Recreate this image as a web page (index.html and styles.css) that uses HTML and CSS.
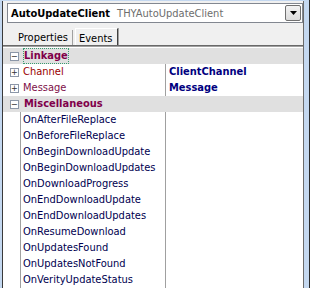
FILE: index.html
```html
<!DOCTYPE html>
<html lang="en">
<head>
    <meta charset="UTF-8">
    <title>Object Inspector</title>
    <link rel="stylesheet" href="styles.css">
</head>
<body>
    <div class="frame">
        <div class="panel">
            <div class="combo">
                <span class="comp-name">AutoUpdateClient</span>
                <span class="comp-type">THYAutoUpdateClient</span>
                <span class="combo-btn">
                    <svg width="7" height="4" viewBox="0 0 7 4"><path d="M0 0h7L3.5 4z" fill="#000"/></svg>
                </span>
            </div>

            <div class="tabs">
                <span class="tab">Properties</span>
                <span class="tab active">Events</span>
            </div>

            <div class="grid">
                <div class="row cat">
                    <span class="box">&minus;</span>
                    <span class="name"><span class="focus">Linkage</span></span>
                </div>
                <div class="row sub">
                    <span class="box">+</span>
                    <span class="name ref">Channel</span>
                    <span class="value">ClientChannel</span>
                </div>
                <div class="row sub">
                    <span class="box">+</span>
                    <span class="name ref2">Message</span>
                    <span class="value">Message</span>
                </div>
                <div class="row cat">
                    <span class="box">&minus;</span>
                    <span class="name">Miscellaneous</span>
                </div>
                <div class="row item"><span class="name">OnAfterFileReplace</span><span class="value"></span></div>
                <div class="row item"><span class="name">OnBeforeFileReplace</span><span class="value"></span></div>
                <div class="row item"><span class="name">OnBeginDownloadUpdate</span><span class="value"></span></div>
                <div class="row item"><span class="name">OnBeginDownloadUpdates</span><span class="value"></span></div>
                <div class="row item"><span class="name">OnDownloadProgress</span><span class="value"></span></div>
                <div class="row item"><span class="name">OnEndDownloadUpdate</span><span class="value"></span></div>
                <div class="row item"><span class="name">OnEndDownloadUpdates</span><span class="value"></span></div>
                <div class="row item"><span class="name">OnResumeDownload</span><span class="value"></span></div>
                <div class="row item"><span class="name">OnUpdatesFound</span><span class="value"></span></div>
                <div class="row item"><span class="name">OnUpdatesNotFound</span><span class="value"></span></div>
                <div class="row item"><span class="name">OnVerityUpdateStatus</span><span class="value"></span></div>
            </div>
        </div>
    </div>
</body>
</html>
```

FILE: styles.css
```css
* {
    margin: 0;
    padding: 0;
    box-sizing: border-box;
}

body {
    font-family: 'DejaVu Sans Condensed', 'Liberation Sans', sans-serif;
    font-size: 11px;
    background: #fff;
}

.frame {
    width: 310px;
    height: 288px;
    overflow: hidden;
    background: #c4d8f0;
    border-right: 1px solid #2a2a2a;
    padding: 1px 5px 0 2px;
}

.panel {
    height: 100%;
    background: #f0f0f0;
    border-left: 1px solid #3a3a3a;
    border-right: 1px solid #6a6a6a;
    display: flex;
    flex-direction: column;
}

.combo {
    margin: 2px 0 0 4px;
    height: 20px;
    background: #fff;
    border: 1px solid #828790;
    display: flex;
    align-items: center;
    padding-left: 3px;
    gap: 7px;
}

.comp-name {
    font-weight: bold;
    color: #000;
}

.comp-type {
    color: #6d6d6d;
}

.combo-btn {
    margin-left: auto;
    margin-right: 1px;
    width: 16px;
    height: 16px;
    border: 1px solid #707070;
    border-radius: 2px;
    background: linear-gradient(#f2f2f2, #dcdcdc);
    display: flex;
    align-items: center;
    justify-content: center;
}

.tabs {
    height: 22px;
    display: flex;
    align-items: flex-end;
    padding-left: 8px;
}

.tab {
    height: 15px;
    line-height: 13px;
    padding: 1px 4px 0 7px;
    border-right: 1px solid #a0a0a0;
    color: #000;
}

.tab.active {
    height: 17px;
    padding: 3px 5px 0 3px;
    margin-left: 2px;
    background: #f0f0f0;
    border-left: 1px solid #fff;
    border-top: 1px solid #fff;
    border-right: 1px solid #404040;
    box-shadow: 1px 0 0 #a0a0a0;
}

.grid {
    flex: 1;
    background: #fff;
    border-top: 1px solid #696969;
    box-shadow: inset 0 1px 0 #a0a0a0;
    padding-top: 2px;
}

.row {
    height: 16px;
    display: flex;
    align-items: center;
    position: relative;
}

.row .name {
    width: 162px;
    padding-left: 20px;
    height: 16px;
    line-height: 16px;
    white-space: nowrap;
}

.row .value {
    flex: 1;
    height: 16px;
    line-height: 16px;
    padding-left: 3px;
    border-left: 1px solid #a0a0a0;
    font-weight: bold;
    color: #000080;
}

.row.cat {
    background: #e0e0e0;
}

.row.cat .name {
    font-weight: bold;
    color: #80004a;
    padding-left: 21px;
}

.focus {
    display: inline-block;
    height: 16px;
    margin-left: -1px;
    padding: 0 1px;
    outline: 1px dotted #3a9a70;
    outline-offset: -1px;
}

.box {
    position: absolute;
    left: 7px;
    top: 4px;
    width: 9px;
    height: 9px;
    border: 1px solid #8c97a8;
    background: #fff;
    font-size: 9px;
    line-height: 7px;
    text-align: center;
    color: #333;
}

.row.sub .name.ref {
    color: #990000;
}

.row.sub .name.ref2 {
    color: #80104a;
}

.row.item .name {
    color: #000050;
    margin-left: 17px;
    width: 145px;
    padding-left: 2px;
    border-left: 1px solid #a0a0a0;
}
```
